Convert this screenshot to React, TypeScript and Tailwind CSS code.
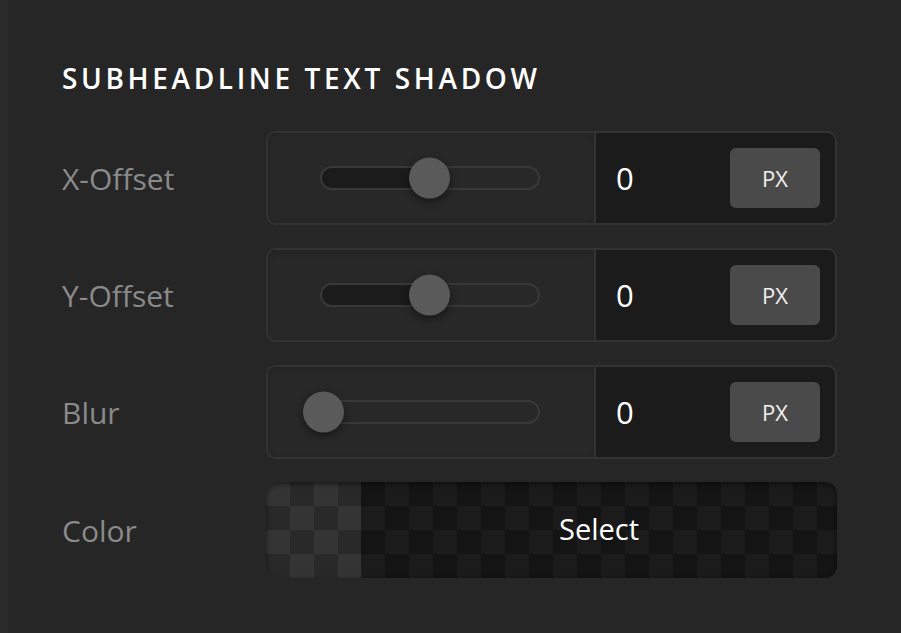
const font = { fontFamily: '"Open Sans", "Noto Sans", sans-serif' };

type Row = { label: string; pct: number };

const rows: Row[] = [
  { label: "X-Offset", pct: 50 },
  { label: "Y-Offset", pct: 50 },
  { label: "Blur", pct: 0 },
];

const Slider = ({ pct }: { pct: number }) => (
  <div className="relative ml-[52px] h-6 w-[220px] rounded-full border-2 border-[#383838] bg-[#282828]">
    <div
      className="absolute inset-y-0 left-0 rounded-l-full bg-[#1b1b1b]"
      style={{ width: `${pct}%` }}
    />
    <div
      className="absolute top-1/2 h-[41px] w-[41px] -translate-y-1/2 rounded-full bg-[#5a5a5a] shadow-[0_3px_8px_rgba(0,0,0,0.45)]"
      style={{ left: `calc(${pct}% - ${pct === 0 ? 19 : 21}px)` }}
    />
  </div>
);

const SliderRow = ({ label, pct }: Row) => (
  <div className="flex items-center">
    <div className="w-[204px] text-[30px] text-[#8a8a8a]">{label}</div>
    <div className="flex h-[94px] w-[571px] overflow-hidden rounded-[10px] border-2 border-[#333]">
      <div className="flex w-[326px] items-center bg-[#282828] shadow-[inset_0_2px_6px_rgba(0,0,0,0.15)]">
        <Slider pct={pct} />
      </div>
      <div className="flex flex-1 items-center justify-between border-l-2 border-[#333] bg-[#1b1b1b] pl-[20px] pr-[15px]">
        <span className="text-[31px] text-white">0</span>
        <button className="flex h-[60px] w-[90px] items-center justify-center rounded-md bg-[#4a4a4a] text-[22px] text-[#f0f0f0]">
          PX
        </button>
      </div>
    </div>
  </div>
);

export default function App() {
  return (
    <div className="flex min-h-screen bg-[#262626]" style={font}>
      <div className="w-2 bg-[#2a2a2a]" />
      <div className="flex-1 pl-[54px] pt-[60px]">
        <h2 className="text-[28px] font-semibold leading-[36px] tracking-[0.13em] text-white">
          SUBHEADLINE TEXT SHADOW
        </h2>
        <div className="mt-[35px] flex flex-col gap-[23px]">
          {rows.map((r) => (
            <SliderRow key={r.label} {...r} />
          ))}
          <div className="flex items-center">
            <div className="w-[204px] text-[30px] text-[#8a8a8a]">Color</div>
            <div className="relative flex h-[96px] w-[571px] overflow-hidden rounded-[12px]">
              <div className="w-[95px] bg-[conic-gradient(#292929_25%,#343434_0_50%,#292929_0_75%,#343434_0)] bg-[length:48px_48px]" />
              <div className="flex flex-1 items-center justify-center bg-[conic-gradient(#1b1b1b_25%,#141414_0_50%,#1b1b1b_0_75%,#141414_0)] bg-[length:48px_48px] pb-[3px] text-[29px] text-white">
                Select
              </div>
              <div className="pointer-events-none absolute inset-0 rounded-[12px] shadow-[inset_0_2px_5px_rgba(0,0,0,0.5)]" />
            </div>
          </div>
        </div>
      </div>
    </div>
  );
}
